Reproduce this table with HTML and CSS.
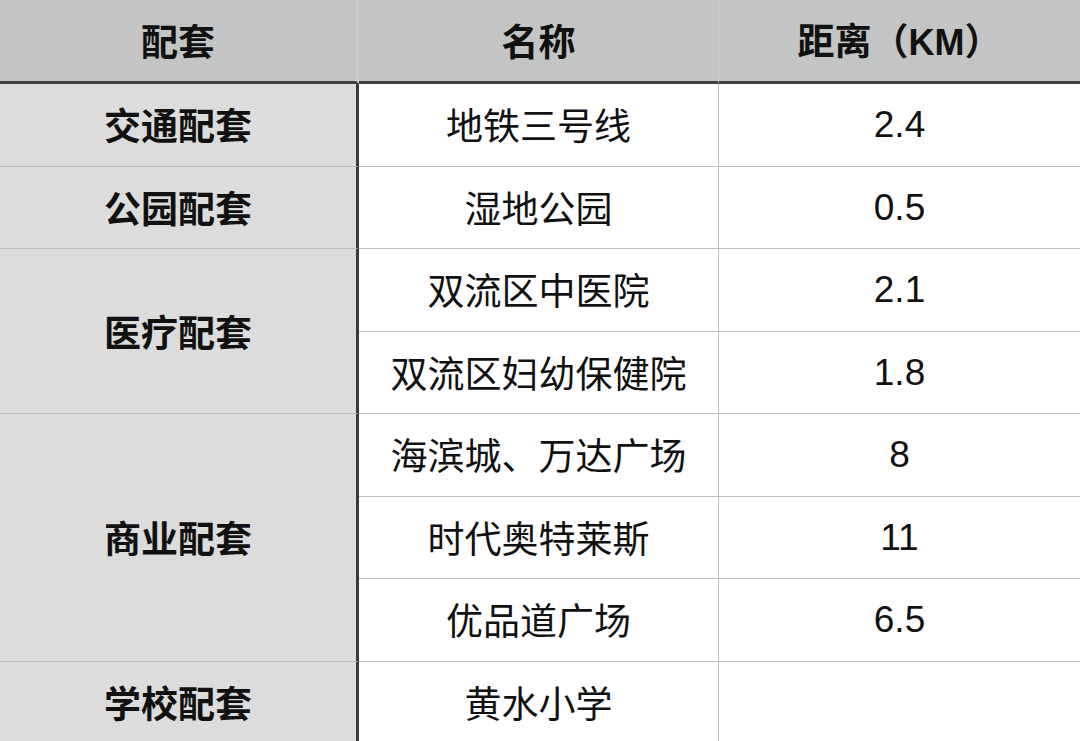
FILE: index.html
```html
<!DOCTYPE html>
<html lang="zh-CN">
<head>
<meta charset="utf-8">
<title>配套</title>
<link rel="stylesheet" href="styles.css">
</head>
<body>
<table class="grid">
  <colgroup>
    <col class="c1">
    <col class="c2">
    <col class="c3">
  </colgroup>
  <thead>
    <tr class="head">
      <th class="h h1">配套</th>
      <th class="h h2">名称</th>
      <th class="h h3">距离（<span class="latin">KM</span>）</th>
    </tr>
  </thead>
  <tbody>
    <tr class="row">
      <td class="cat">交通配套</td>
      <td class="name">地铁三号线</td>
      <td class="num">2.4</td>
    </tr>
    <tr class="row">
      <td class="cat">公园配套</td>
      <td class="name">湿地公园</td>
      <td class="num">0.5</td>
    </tr>
    <tr class="row">
      <td class="cat" rowspan="2">医疗配套</td>
      <td class="name">双流区中医院</td>
      <td class="num">2.1</td>
    </tr>
    <tr class="row">
      <td class="name">双流区妇幼保健院</td>
      <td class="num">1.8</td>
    </tr>
    <tr class="row">
      <td class="cat" rowspan="3">商业配套</td>
      <td class="name">海滨城、万达广场</td>
      <td class="num">8</td>
    </tr>
    <tr class="row">
      <td class="name">时代奥特莱斯</td>
      <td class="num">11</td>
    </tr>
    <tr class="row">
      <td class="name">优品道广场</td>
      <td class="num">6.5</td>
    </tr>
    <tr class="row">
      <td class="cat">学校配套</td>
      <td class="name">黄水小学</td>
      <td class="num"></td>
    </tr>
  </tbody>
</table>
</body>
</html>
```
FILE: styles.css
```css
html, body {
  margin: 0;
  padding: 0;
  background: #ffffff;
  overflow: hidden;
}
body {
  width: 1080px;
  height: 741px;
  font-family: "Noto Sans CJK SC", "Liberation Sans", sans-serif;
  color: #111111;
}
.grid {
  width: 1080px;
  table-layout: fixed;
  border-collapse: separate;
  border-spacing: 0;
}
.c1 { width: 359px; }
.c2 { width: 360px; }
.c3 { width: 361px; }
.grid th, .grid td {
  padding: 0;
  text-align: center;
  vertical-align: middle;
  font-size: 37px;
  line-height: 1;
}
.head .h {
  height: 84px;
  background: #c3c4c4;
  border-bottom: 3px solid #3f3f3f;
  font-weight: 700;
  padding-top: 0;
  box-sizing: border-box;
}
.h1, .h2 {
  border-right: 1px solid #cdcece;
}
.h1 {
  border-right-width: 3px;
  border-right-color: #c9caca;
}
.latin {
  font-family: "Liberation Sans", sans-serif;
  font-weight: 700;
  font-size: 36px;
}
.row td {
  height: 81.5px;
  border-bottom: 1px solid #bcbcbc;
}
.cat {
  background: #dcdcdc;
  font-weight: 700;
  border-right: 3px solid #3a3a3a;
  padding-top: 4px;
}
.name {
  border-right: 1px solid #bcbcbc;
  font-weight: 400;
  padding-top: 2px;
}
.num {
  font-family: "Liberation Sans", sans-serif;
  font-weight: 400;
  font-size: 36px;
}
```
